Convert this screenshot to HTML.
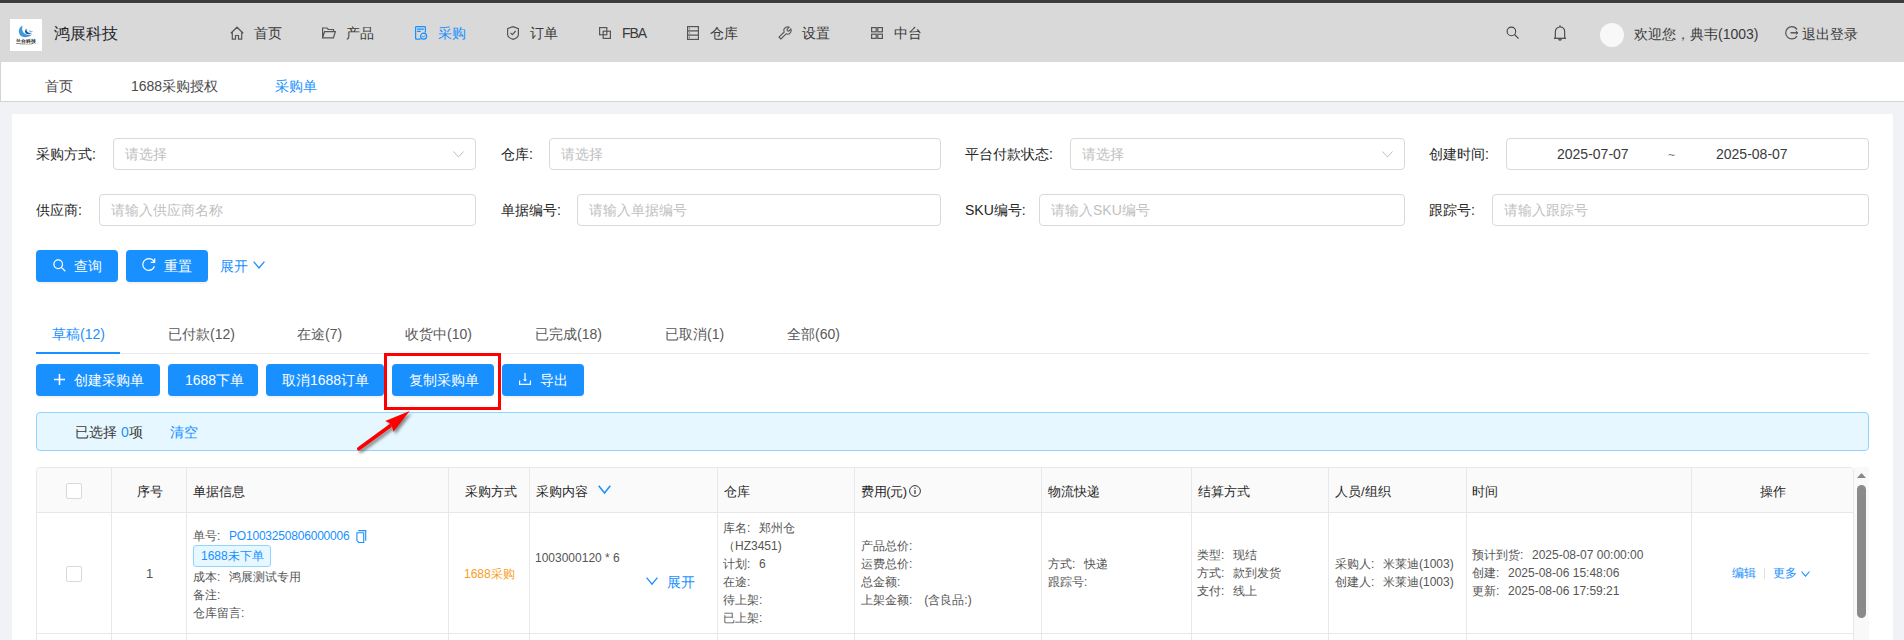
<!DOCTYPE html>
<html><head><meta charset="utf-8">
<style>
*{box-sizing:border-box;margin:0;padding:0}
html,body{width:1904px;height:640px;overflow:hidden}
body{font-family:"Liberation Sans",sans-serif;background:#f0f2f5;position:relative;color:#333}
.a{position:absolute;white-space:nowrap}
svg{position:absolute;overflow:visible}
#topstrip{left:0;top:0;width:1904px;height:3px;background:#3c3c3c}
#hdr{left:0;top:3px;width:1904px;height:59px;background:#d9d9d9;border-top:1px solid #dedede}
#logo{left:10px;top:19px;width:32px;height:32px;background:#fff}
#brand{left:54px;top:25px;font-size:16px;line-height:18px;color:#1f1f2a}
.nav{top:25px;font-size:14px;line-height:16px;color:#3a3a3a}
.blue{color:#1890ff !important}
#tabsbar{left:0;top:62px;width:1904px;height:40px;background:#fff;border-bottom:1px solid #d4d4d4;border-left:1px solid #d4d4d4}
.tb{top:78px;font-size:14px;line-height:16px;color:#4a4a4a}
#card{left:12px;top:114px;width:1881px;height:600px;border-radius:2px;background:#fff}
.lbl{font-size:14px;line-height:16px;color:#262626}
.inp{height:32px;border:1px solid #d9d9d9;border-radius:4px;background:#fff}
.ph{font-size:14px;line-height:16px;color:#bfbfbf}
.btn{height:32px;border-radius:4px;background:#1890ff;color:#fff;font-size:14px;line-height:32px;box-shadow:0 2px 0 rgba(0,0,0,.045)}
.tab{top:326px;font-size:14px;line-height:16px;color:#595959}
.th{top:484px;font-size:13px;line-height:16px;color:#262626}
.vl{top:468px;width:1px;height:172px;background:#e8e8e8}
.t{font-size:12px;line-height:18px;color:#555}
.c{font-style:normal;display:inline-block;width:12px}
</style></head><body>
<div class="a" id="topstrip"></div>
<div class="a" id="hdr"></div>
<div class="a" id="logo"></div>
<svg style="left:10px;top:19px" width="32" height="32" viewBox="0 0 32 32">
  <path d="M12.8 6.6 C7.5 8.5 7.8 16 12 17.6 C15 18.8 19.5 18.2 22 15.5 C18 16.5 14.2 15.5 12.8 12.5 C11.8 10.5 12 8.3 12.8 6.6Z" fill="#3a9ae0"/>
  <path d="M16.6 9.4 C14.3 11 14.6 14.2 17 15.1 C18.6 15.7 20.6 15.1 21.7 14.1 C19.6 14.3 17.6 13.6 16.9 12.1 C16.5 11.1 16.4 10.2 16.6 9.4Z" fill="#1f5ea6"/>
  <path d="M19.6 10.8 C18.9 12 19.4 13.4 21 13.4 C21.9 13.4 22.6 12.9 23 12.3 C21.6 12.6 20.2 12.1 19.6 10.8Z" fill="#5ab0ea"/>
  <text x="16" y="24" font-size="5.1" text-anchor="middle" fill="#222" font-weight="bold" style="font-family:'Liberation Sans',sans-serif">兰台科技</text>
  <rect x="10" y="25.2" width="12" height="0.7" fill="#bbb"/>
</svg>
<div class="a" id="brand">鸿展科技</div>

<!-- nav icons -->
<svg style="left:230px;top:26px" width="14" height="14" viewBox="0 0 14 14" fill="none" stroke="#555" stroke-width="1.2">
  <path d="M0.8 7.2 L7 1.2 L13.2 7.2 M2.3 5.8 V13.2 H5.5 V9.5 H8.5 V13.2 H11.7 V5.8"/>
</svg>
<div class="a nav" style="left:254px">首页</div>
<svg style="left:322px;top:27px" width="14" height="12" viewBox="0 0 14 12" fill="none" stroke="#555" stroke-width="1.2">
  <path d="M0.6 10.8 V1 H5 L6.3 2.5 H11.5 V4.6 M0.6 10.8 L2.6 4.6 H13.4 L11.4 10.8 Z"/>
</svg>
<div class="a nav" style="left:346px">产品</div>
<svg style="left:415px;top:26px" width="13" height="14" viewBox="0 0 13 14" fill="none" stroke="#1890ff" stroke-width="1.2">
  <path d="M5.6 13.2 H1.4 Q0.6 13.2 0.6 12.4 V1.4 Q0.6 0.6 1.4 0.6 H9.6 Q10.4 0.6 10.4 1.4 V6.5"/>
  <path d="M2.6 3.2 H8.4 M2.6 5.4 H5.2" stroke-width="1.2" stroke-linecap="round"/>
  <circle cx="8.6" cy="10.2" r="3"/>
  <path d="M7.3 10.2 L8.3 11.2 L9.9 9.5" stroke-width="1"/>
</svg>
<div class="a nav blue" style="left:438px">采购</div>
<svg style="left:507px;top:26px" width="12" height="14" viewBox="0 0 12 14" fill="none" stroke="#555" stroke-width="1.2">
  <path d="M6 0.6 L11.4 2.6 V8.4 C11.4 10.8 9 12.4 6 13.4 C3 12.4 0.6 10.8 0.6 8.4 V2.6 Z"/>
  <path d="M3.5 6.8 L5.4 8.7 L8.6 5"/>
</svg>
<div class="a nav" style="left:530px">订单</div>
<svg style="left:599px;top:27px" width="12" height="12" viewBox="0 0 12 12" fill="none" stroke="#555" stroke-width="1.2">
  <rect x="0.6" y="0.6" width="7.2" height="7.2"/>
  <rect x="4.2" y="4.2" width="7.2" height="7.2"/>
</svg>
<div class="a nav" style="left:622px;letter-spacing:-1.1px">FBA</div>
<svg style="left:687px;top:26px" width="12" height="14" viewBox="0 0 12 14" fill="none" stroke="#555" stroke-width="1.2">
  <rect x="0.6" y="0.6" width="10.8" height="12.8"/>
  <path d="M0.6 4.8 H11.4 M0.6 9.1 H11.4"/>
  <path d="M2.6 2.2 V3.2 M2.6 6.5 V7.5 M2.6 10.8 V11.8" stroke-width="1"/>
</svg>
<div class="a nav" style="left:710px">仓库</div>
<svg style="left:778px;top:26px" width="14" height="14" viewBox="0 0 14 14" fill="none" stroke="#555" stroke-width="1.1">
  <path d="M1 11.2 L6.2 6 C5.5 4.2 6.2 2 8 1.2 C9.2 0.7 10.4 0.8 11.2 1.2 L9 3.3 L9.4 4.8 L10.8 5.2 L12.9 3 C13.3 4 13.3 5.3 12.7 6.3 C11.8 7.9 9.7 8.5 8.1 7.8 L2.9 13 Z"/>
</svg>
<div class="a nav" style="left:802px">设置</div>
<svg style="left:871px;top:27px" width="12" height="12" viewBox="0 0 12 12" fill="none" stroke="#555" stroke-width="1.2">
  <rect x="0.6" y="0.6" width="4.6" height="4.2"/><rect x="6.8" y="0.6" width="4.6" height="4.2"/>
  <rect x="0.6" y="7.2" width="4.6" height="4.2"/><rect x="6.8" y="7.2" width="4.6" height="4.2"/>
</svg>
<div class="a nav" style="left:894px">中台</div>

<!-- right header -->
<svg style="left:1506px;top:26px" width="14" height="14" viewBox="0 0 14 14" fill="none" stroke="#444" stroke-width="1.1">
  <circle cx="5.4" cy="5.4" r="4.3"/><path d="M8.5 8.5 L12.6 12.6"/>
</svg>
<svg style="left:1553px;top:24px" width="14" height="17" viewBox="0 0 14 17" fill="none" stroke="#444" stroke-width="1.1">
  <path d="M7 1.2 V3"/>
  <path d="M2.3 14 V8 C2.3 5 4.2 3 7 3 C9.8 3 11.7 5 11.7 8 V14"/>
  <path d="M0.9 14.3 H13.1" stroke-width="1.2"/>
  <path d="M5.7 14.6 C5.8 16.6 8.2 16.6 8.3 14.6"/>
</svg>
<div class="a" style="left:1600px;top:23px;width:24px;height:24px;border-radius:50%;background:#f8f8f8"></div>
<div class="a nav" style="left:1634px;top:26px">欢迎您，典韦(1003)</div>
<svg style="left:1785px;top:26px" width="14" height="14" viewBox="0 0 14 14" fill="none" stroke="#555" stroke-width="1.2">
  <path d="M12 3.6 C10.9 1.8 9 0.7 6.8 0.7 C3.4 0.7 0.7 3.4 0.7 6.8 C0.7 10.2 3.4 12.9 6.8 12.9 C9 12.9 10.9 11.8 12 10"/>
  <path d="M5.5 6.8 H13" stroke-width="1.5"/><path d="M10.8 5 L13 6.8 L10.8 8.6" stroke-width="1"/>
</svg>
<div class="a nav" style="left:1802px;top:26px">退出登录</div>

<div class="a" id="tabsbar"></div>
<div class="a tb" style="left:45px">首页</div>
<div class="a tb" style="left:131px">1688采购授权</div>
<div class="a tb blue" style="left:275px">采购单</div>

<div class="a" id="card"></div>
<!-- form row 1 -->
<div class="a lbl" style="left:36px;top:146px">采购方式:</div>
<div class="a inp" style="left:113px;top:138px;width:363px"></div>
<div class="a ph" style="left:125px;top:146px">请选择</div>
<svg style="left:453px;top:151px" width="11" height="7" viewBox="0 0 11 7" fill="none" stroke="#bfbfbf" stroke-width="1"><path d="M0.5 0.5 L5.5 6 L10.5 0.5"/></svg>
<div class="a lbl" style="left:501px;top:146px">仓库:</div>
<div class="a inp" style="left:549px;top:138px;width:392px"></div>
<div class="a ph" style="left:561px;top:146px">请选择</div>
<div class="a lbl" style="left:965px;top:146px">平台付款状态:</div>
<div class="a inp" style="left:1070px;top:138px;width:335px"></div>
<div class="a ph" style="left:1082px;top:146px">请选择</div>
<svg style="left:1382px;top:151px" width="11" height="7" viewBox="0 0 11 7" fill="none" stroke="#bfbfbf" stroke-width="1"><path d="M0.5 0.5 L5.5 6 L10.5 0.5"/></svg>
<div class="a lbl" style="left:1429px;top:146px">创建时间:</div>
<div class="a inp" style="left:1506px;top:138px;width:363px"></div>
<div class="a lbl" style="left:1557px;top:146px;color:#3a3a3a">2025-07-07</div>
<div class="a lbl" style="left:1668px;top:147px;color:#777;font-size:12px">~</div>
<div class="a lbl" style="left:1716px;top:146px;color:#3a3a3a">2025-08-07</div>
<!-- form row 2 -->
<div class="a lbl" style="left:36px;top:202px">供应商:</div>
<div class="a inp" style="left:99px;top:194px;width:377px"></div>
<div class="a ph" style="left:111px;top:202px">请输入供应商名称</div>
<div class="a lbl" style="left:501px;top:202px">单据编号:</div>
<div class="a inp" style="left:577px;top:194px;width:364px"></div>
<div class="a ph" style="left:589px;top:202px">请输入单据编号</div>
<div class="a lbl" style="left:965px;top:202px">SKU编号:</div>
<div class="a inp" style="left:1039px;top:194px;width:366px"></div>
<div class="a ph" style="left:1051px;top:202px">请输入SKU编号</div>
<div class="a lbl" style="left:1429px;top:202px">跟踪号:</div>
<div class="a inp" style="left:1492px;top:194px;width:377px"></div>
<div class="a ph" style="left:1504px;top:202px">请输入跟踪号</div>

<div class="a btn" style="left:36px;top:250px;width:82px"></div>
<svg style="left:53px;top:259px" width="13" height="13" viewBox="0 0 13 13" fill="none" stroke="#fff" stroke-width="1.25"><circle cx="5.2" cy="5.2" r="4.3"/><path d="M8.4 8.4 L12.3 12.3"/></svg>
<div class="a lbl" style="left:74px;top:258px;color:#fff">查询</div>
<div class="a btn" style="left:126px;top:250px;width:82px"></div>
<svg style="left:142px;top:258px" width="14" height="13" viewBox="0 0 14 13" fill="none" stroke="#fff" stroke-width="1.2"><path d="M12.2 4 C11.2 1.9 9.1 0.7 6.8 0.7 C3.5 0.7 0.8 3.3 0.8 6.5 C0.8 9.7 3.5 12.3 6.8 12.3 C9.4 12.3 11.6 10.6 12.4 8.3"/><path d="M12.6 0.5 V4.3 H8.8" stroke-width="1.3"/></svg>
<div class="a lbl" style="left:164px;top:258px;color:#fff">重置</div>
<div class="a lbl blue" style="left:220px;top:258px">展开</div>
<svg style="left:253px;top:261px" width="12" height="8" viewBox="0 0 12 8" fill="none" stroke="#1890ff" stroke-width="1.3"><path d="M0.6 0.6 L6 7 L11.4 0.6"/></svg>

<!-- tabs -->
<div class="a" style="left:36px;top:353px;width:1833px;height:1px;background:#e8e8e8"></div>
<div class="a" style="left:36px;top:352px;width:84px;height:2px;background:#1890ff"></div>
<div class="a tab blue" style="left:52px">草稿(12)</div>
<div class="a tab" style="left:168px">已付款(12)</div>
<div class="a tab" style="left:297px">在途(7)</div>
<div class="a tab" style="left:405px">收货中(10)</div>
<div class="a tab" style="left:535px">已完成(18)</div>
<div class="a tab" style="left:665px">已取消(1)</div>
<div class="a tab" style="left:787px">全部(60)</div>

<div class="a btn" style="left:36px;top:364px;width:124px"></div>
<svg style="left:54px;top:374px" width="11" height="11" viewBox="0 0 11 11" fill="none" stroke="#fff" stroke-width="1.6"><path d="M5.5 0 V11 M0 5.5 H11"/></svg>
<div class="a lbl" style="left:74px;top:372px;color:#fff">创建采购单</div>
<div class="a btn" style="left:168px;top:364px;width:90px"></div>
<div class="a lbl" style="left:185px;top:372px;color:#fff">1688下单</div>
<div class="a btn" style="left:266px;top:364px;width:118px"></div>
<div class="a lbl" style="left:282px;top:372px;color:#fff">取消1688订单</div>
<div class="a btn" style="left:392px;top:364px;width:102px"></div>
<div class="a lbl" style="left:409px;top:372px;color:#fff">复制采购单</div>
<div class="a btn" style="left:502px;top:364px;width:82px"></div>
<svg style="left:518px;top:372px" width="14" height="14" viewBox="0 0 14 14" fill="none" stroke="#fff" stroke-width="1.2"><path d="M7 1 V8.6"/><path d="M5.6 7.4 L7 8.8 L8.4 7.4" stroke-width="1.1"/><path d="M1.6 8.4 V12.3 H12.4 V8.4"/></svg>
<div class="a lbl" style="left:540px;top:372px;color:#fff">导出</div>

<!-- alert -->
<div class="a" style="left:36px;top:412px;width:1833px;height:39px;background:#e6f7ff;border:1px solid #91d5ff;border-radius:4px"></div>
<div class="a lbl" style="left:75px;top:424px;color:#3a3a3a">已选择 <span class="blue">0</span>项</div>
<div class="a lbl blue" style="left:170px;top:424px">清空</div>

<!-- red highlight -->
<div class="a" style="left:384px;top:353px;width:117px;height:57px;border:3px solid #f00"></div>
<svg style="left:350px;top:405px" width="70" height="50" viewBox="0 0 70 50">
  <defs><filter id="sh" x="-30%" y="-30%" width="160%" height="160%"><feGaussianBlur stdDeviation="1.6"/></filter></defs>
  <g transform="translate(2,2.5)" opacity="0.55" filter="url(#sh)"><path d="M8.8 43.8 L40 21" stroke="#333" stroke-width="3.6" stroke-linecap="round"/><path d="M59.7 6 L35.2 16 L41.3 19.9 L43.4 26.8 Z" fill="#333"/></g>
  <path d="M8.8 43.8 L40 21" stroke="#ff0000" stroke-width="3.6" stroke-linecap="round"/>
  <path d="M59.7 6 L35.2 16 Q39.5 17.8 41.3 19.9 Q42.5 22.5 43.4 26.8 Z" fill="#ff0000"/>
</svg>

<!-- table -->
<div class="a" style="left:36px;top:467px;width:1818px;height:180px;border:1px solid #e8e8e8;border-radius:4px 4px 0 0;background:#fff"></div>
<div class="a" style="left:37px;top:468px;width:1816px;height:45px;background:#fafafa;border-bottom:1px solid #e8e8e8;border-radius:3px 3px 0 0"></div>
<div class="a" style="left:37px;top:633px;width:1816px;height:1px;background:#e8e8e8"></div>
<div class="a vl" style="left:111px"></div>
<div class="a vl" style="left:186px"></div>
<div class="a vl" style="left:448px"></div>
<div class="a vl" style="left:529px"></div>
<div class="a vl" style="left:717px"></div>
<div class="a vl" style="left:854px"></div>
<div class="a vl" style="left:1041px"></div>
<div class="a vl" style="left:1191px"></div>
<div class="a vl" style="left:1328px"></div>
<div class="a vl" style="left:1466px"></div>
<div class="a vl" style="left:1691px"></div>
<!-- scrollbar -->
<div class="a" style="left:1854px;top:467px;width:15px;height:173px;background:#f9f9f9"></div>
<svg style="left:1857px;top:473px" width="9" height="5" viewBox="0 0 9 5"><path d="M0 5 L4.5 0 L9 5Z" fill="#888"/></svg>
<div class="a" style="left:1857px;top:485px;width:9px;height:133px;border-radius:5px;background:#8a8a8a"></div>

<div class="a" style="left:66px;top:483px;width:16px;height:16px;border:1px solid #d9d9d9;border-radius:2px;background:#fff"></div>
<div class="a th" style="left:137px">序号</div>
<div class="a th" style="left:193px">单据信息</div>
<div class="a th" style="left:465px">采购方式</div>
<div class="a th" style="left:536px">采购内容</div>
<svg style="left:598px;top:485px" width="13" height="9" viewBox="0 0 13 9" fill="none" stroke="#1890ff" stroke-width="1.5"><path d="M0.7 0.7 L6.5 8 L12.3 0.7"/></svg>
<div class="a th" style="left:724px">仓库</div>
<div class="a th" style="left:861px;letter-spacing:-0.4px">费用(元)</div>
<svg style="left:909px;top:485px" width="12" height="12" viewBox="0 0 12 12" fill="none" stroke="#333" stroke-width="1"><circle cx="6" cy="6" r="5.4"/><path d="M6 5 V9" stroke-width="1.2"/><circle cx="6" cy="3.3" r="0.7" fill="#333" stroke="none"/></svg>
<div class="a th" style="left:1048px">物流快递</div>
<div class="a th" style="left:1198px">结算方式</div>
<div class="a th" style="left:1335px">人员/组织</div>
<div class="a th" style="left:1472px">时间</div>
<div class="a th" style="left:1760px">操作</div>

<!-- row -->
<div class="a" style="left:66px;top:566px;width:16px;height:16px;border:1px solid #d9d9d9;border-radius:2px;background:#fff"></div>
<div class="a t" style="left:146px;top:565px;font-size:13px">1</div>

<div class="a t" style="left:193px;top:527px">单号<i class="c">:</i><span class="blue" style="letter-spacing:-0.2px">PO1003250806000006</span></div>
<svg style="left:355px;top:529px" width="12" height="15" viewBox="0 0 12 15" fill="none" stroke="#1890ff" stroke-width="1.1"><path d="M1.9 3.7 H8.7 V13.5 H3.8 L1.9 11.6 Z"/><path d="M3.3 1.6 H10.7 V11.8"/></svg>
<div class="a" style="left:193px;top:545px;width:78px;height:22px;border:1px solid #91d5ff;background:#e6f7ff;border-radius:3px"></div>
<div class="a t blue" style="left:201px;top:547px">1688未下单</div>
<div class="a t" style="left:193px;top:568px">成本<i class="c">:</i>鸿展测试专用</div>
<div class="a t" style="left:193px;top:586px">备注<i class="c">:</i></div>
<div class="a t" style="left:193px;top:604px">仓库留言<i class="c">:</i></div>

<div class="a t" style="left:464px;top:565px;color:#fa9d1c">1688采购</div>

<div class="a t" style="left:535px;top:549px">1003000120 * 6</div>
<svg style="left:646px;top:577px" width="12" height="8" viewBox="0 0 12 8" fill="none" stroke="#1890ff" stroke-width="1.3"><path d="M0.6 0.6 L6 7.2 L11.4 0.6"/></svg>
<div class="a lbl blue" style="left:667px;top:574px">展开</div>

<div class="a t" style="left:723px;top:519px">库名<i class="c">:</i>郑州仓</div>
<div class="a t" style="left:723px;top:537px">（HZ3451)</div>
<div class="a t" style="left:723px;top:555px">计划<i class="c">:</i>6</div>
<div class="a t" style="left:723px;top:573px">在途<i class="c">:</i></div>
<div class="a t" style="left:723px;top:591px">待上架<i class="c">:</i></div>
<div class="a t" style="left:723px;top:609px">已上架<i class="c">:</i></div>

<div class="a t" style="left:861px;top:537px">产品总价<i class="c">:</i></div>
<div class="a t" style="left:861px;top:555px">运费总价<i class="c">:</i></div>
<div class="a t" style="left:861px;top:573px">总金额<i class="c">:</i></div>
<div class="a t" style="left:861px;top:591px">上架金额<i class="c">:</i> (含良品:)</div>

<div class="a t" style="left:1048px;top:555px">方式<i class="c">:</i>快递</div>
<div class="a t" style="left:1048px;top:573px">跟踪号<i class="c">:</i></div>

<div class="a t" style="left:1197px;top:546px">类型<i class="c">:</i>现结</div>
<div class="a t" style="left:1197px;top:564px">方式<i class="c">:</i>款到发货</div>
<div class="a t" style="left:1197px;top:582px">支付<i class="c">:</i>线上</div>

<div class="a t" style="left:1335px;top:555px">采购人<i class="c">:</i>米莱迪(1003)</div>
<div class="a t" style="left:1335px;top:573px">创建人<i class="c">:</i>米莱迪(1003)</div>

<div class="a t" style="left:1472px;top:546px">预计到货<i class="c">:</i>2025-08-07 00:00:00</div>
<div class="a t" style="left:1472px;top:564px">创建<i class="c">:</i>2025-08-06 15:48:06</div>
<div class="a t" style="left:1472px;top:582px">更新<i class="c">:</i>2025-08-06 17:59:21</div>

<div class="a t blue" style="left:1732px;top:564px">编辑</div>
<div class="a" style="left:1764px;top:568px;width:1px;height:11px;background:#e0e0e0"></div>
<div class="a t blue" style="left:1773px;top:564px">更多</div>
<svg style="left:1801px;top:571px" width="9" height="6" viewBox="0 0 9 6" fill="none" stroke="#1890ff" stroke-width="1.1"><path d="M0.5 0.5 L4.5 5.2 L8.5 0.5"/></svg>
</body></html>
